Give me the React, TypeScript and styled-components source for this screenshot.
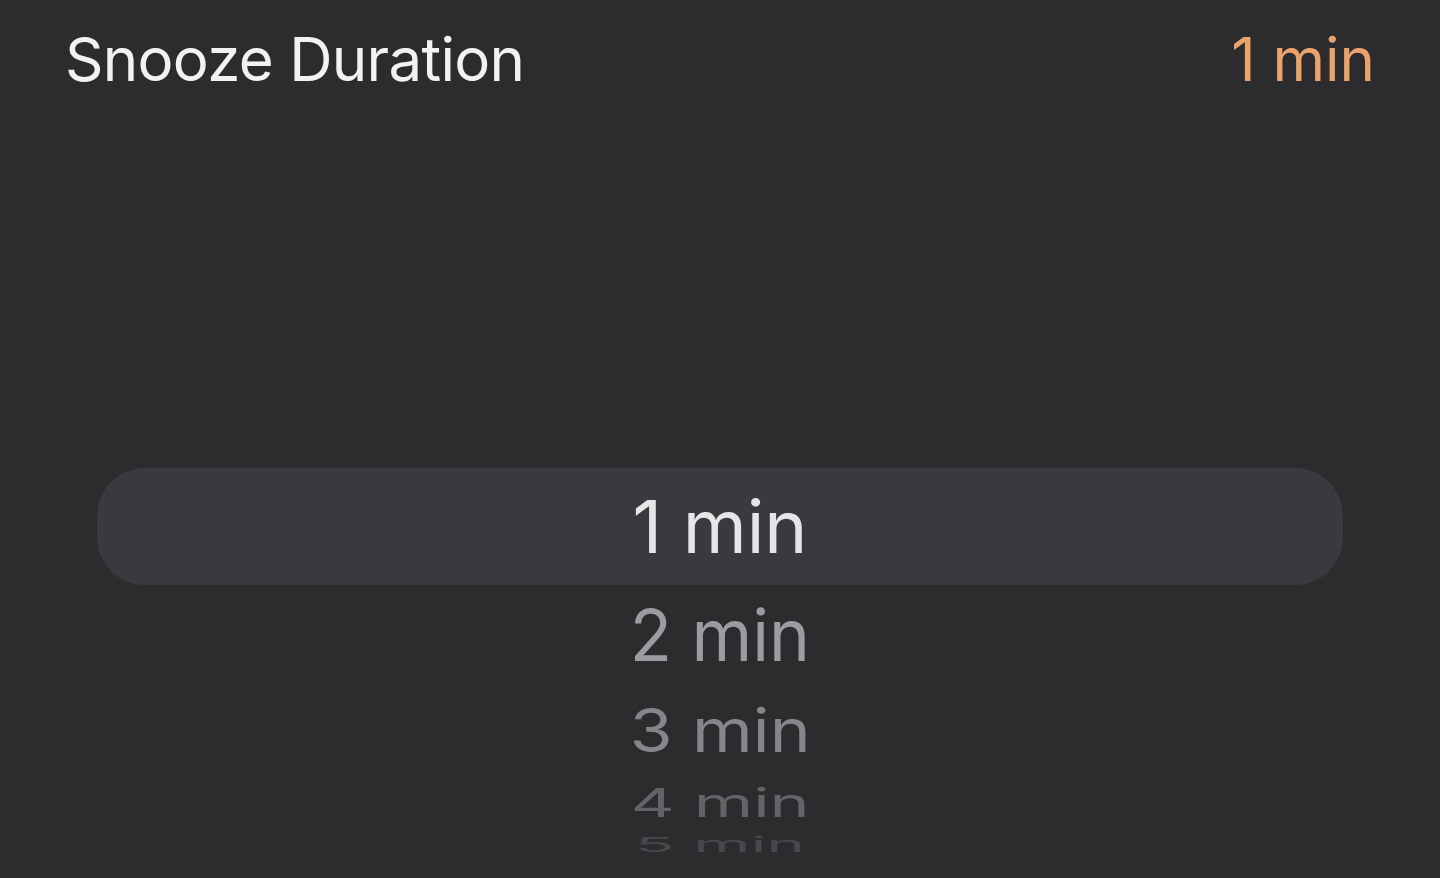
import React from 'react';
import styled, {createGlobalStyle} from 'styled-components';

const GlobalStyle = createGlobalStyle`
  html, body {
    margin: 0;
    padding: 0;
    background: #2c2c2e;
  }
  body {
    font-family: Inter, "Noto Sans", sans-serif;
  }
`

const options = [
    {label: '1 min', sx: 1, sy: 1, color: '#e6e6e8', height: 117},
    {label: '2 min', sx: 0.95, sy: 0.98, color: '#9c9ca0', height: 100},
    {label: '3 min', sx: 0.95, sy: 0.82, color: '#86868a', height: 90},
    {label: '4 min', sx: 0.93, sy: 0.55, color: '#646468', height: 54},
    {label: '5 min', sx: 0.9, sy: 0.28, color: '#48484c', height: 30},
]

export default function App() {
    return (
        <Screen>
            <GlobalStyle/>
            <Header>
                <Title>Snooze Duration</Title>
                <Value>1 min</Value>
            </Header>

            <Wheel>
                {options.map((o, i) => (
                    <WheelRow key={o.label} $selected={i === 0} $height={o.height}>
                        <WheelLabel $color={o.color} style={{transform: `scale(${o.sx}, ${o.sy})`}}>
                            {o.label}
                        </WheelLabel>
                    </WheelRow>
                ))}
            </Wheel>
        </Screen>
    );
}

const Screen = styled.div`
  width: 1440px;
  height: 878px;
  overflow: hidden;
  background: #2c2c2e;
  display: flex;
  flex-direction: column;
`
const Header = styled.div`
  height: 118px;
  padding: 0 65px;
  display: flex;
  align-items: center;
  justify-content: space-between;
`
const Title = styled.div`
  color: #f2f2f4;
  font-size: 60px;
  font-weight: 400;
  letter-spacing: -0.7px;
  line-height: 1;
`
const Value = styled.div`
  color: #eba36c;
  font-size: 60px;
  font-weight: 400;
  line-height: 1;
`
const Wheel = styled.div`
  margin-top: 350px;
  padding: 0 97px;
  display: flex;
  flex-direction: column;
  align-items: center;
`
const WheelRow = styled.div<{ $selected: boolean; $height: number }>`
  width: 100%;
  height: ${p => p.$height}px;
  flex-shrink: 0;
  display: flex;
  align-items: center;
  justify-content: center;
  border-radius: 48px;
  background: ${p => (p.$selected ? '#3a3a3e' : 'transparent')};
`
const WheelLabel = styled.div<{ $color: string }>`
  color: ${p => p.$color};
  font-size: 73px;
  font-weight: 400;
  line-height: 1;
`
